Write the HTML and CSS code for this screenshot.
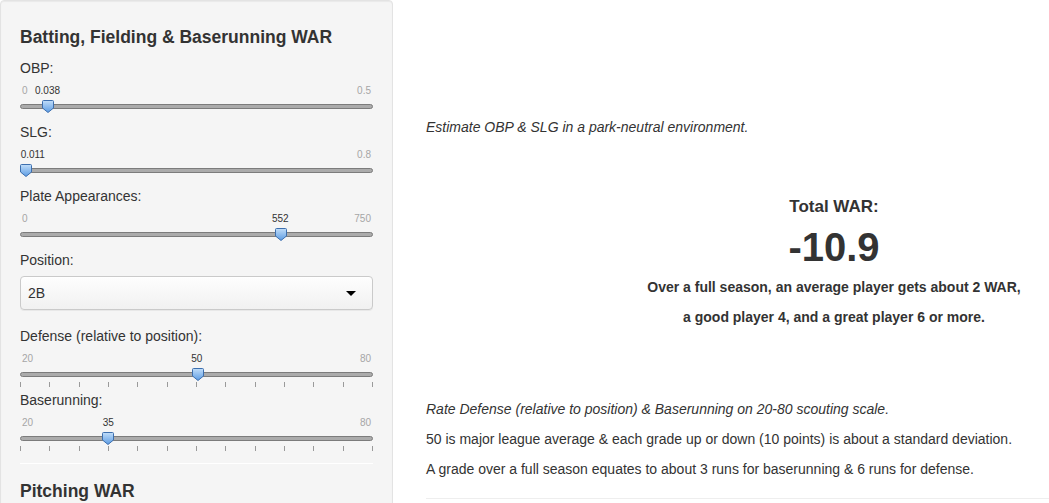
FILE: index.html
```html
<!DOCTYPE html>
<html lang="en">
<head>
  <meta charset="UTF-8">
  <meta name="viewport" content="width=device-width, initial-scale=1.0">
  <title>WAR Calculator</title>
  <link rel="stylesheet" href="styles.css">
</head>
<body>
  <svg class="defs" width="0" height="0">
    <defs>
      <linearGradient id="handleFill" x1="0" y1="0" x2="0" y2="1">
        <stop offset="0" stop-color="#c2def9"/>
        <stop offset="1" stop-color="#5b9be3"/>
      </linearGradient>
    </defs>
  </svg>

  <div class="page">
    <div class="well">
      <h4>Batting, Fielding &amp; Baserunning WAR</h4>

      <div class="field">
        <label>OBP:</label>
        <div class="slider">
          <div class="scale"><span>0</span><span>0.5</span></div>
          <span class="value" style="left: 27.5px">0.038</span>
          <div class="track"></div>
          <span class="handle" style="left: 21.5px"><svg width="12" height="13" viewBox="0 0 12 13"><path d="M1.5 .5h9a1 1 0 0 1 1 1V8L6 12.5.5 8V1.5a1 1 0 0 1 1-1z"/></svg></span>
        </div>
      </div>

      <div class="field">
        <label>SLG:</label>
        <div class="slider">
          <div class="scale"><span></span><span>0.8</span></div>
          <span class="value" style="left: 12.8px">0.011</span>
          <div class="track"></div>
          <span class="handle" style="left: 0px"><svg width="12" height="13" viewBox="0 0 12 13"><path d="M1.5 .5h9a1 1 0 0 1 1 1V8L6 12.5.5 8V1.5a1 1 0 0 1 1-1z"/></svg></span>
        </div>
      </div>

      <div class="field">
        <label>Plate Appearances:</label>
        <div class="slider">
          <div class="scale"><span>0</span><span>750</span></div>
          <span class="value" style="left: 260.3px">552</span>
          <div class="track"></div>
          <span class="handle" style="left: 254.7px"><svg width="12" height="13" viewBox="0 0 12 13"><path d="M1.5 .5h9a1 1 0 0 1 1 1V8L6 12.5.5 8V1.5a1 1 0 0 1 1-1z"/></svg></span>
        </div>
      </div>

      <div class="field">
        <label>Position:</label>
        <div class="select">
          <span>2B</span>
          <span class="caret"></span>
        </div>
      </div>

      <div class="field field-after-select">
        <label>Defense (relative to position):</label>
        <div class="slider">
          <div class="scale"><span>20</span><span>80</span></div>
          <span class="value" style="left: 176.7px">50</span>
          <div class="track"></div>
          <div class="ticks">
            <i></i><i></i><i></i><i></i><i></i><i></i><i></i><i></i><i></i><i></i><i></i><i></i><i></i>
          </div>
          <span class="handle" style="left: 171.7px"><svg width="12" height="13" viewBox="0 0 12 13"><path d="M1.5 .5h9a1 1 0 0 1 1 1V8L6 12.5.5 8V1.5a1 1 0 0 1 1-1z"/></svg></span>
        </div>
      </div>

      <div class="field">
        <label>Baserunning:</label>
        <div class="slider">
          <div class="scale"><span>20</span><span>80</span></div>
          <span class="value" style="left: 88.3px">35</span>
          <div class="track"></div>
          <div class="ticks">
            <i></i><i></i><i></i><i></i><i></i><i></i><i></i><i></i><i></i><i></i><i></i><i></i><i></i>
          </div>
          <span class="handle" style="left: 82.3px"><svg width="12" height="13" viewBox="0 0 12 13"><path d="M1.5 .5h9a1 1 0 0 1 1 1V8L6 12.5.5 8V1.5a1 1 0 0 1 1-1z"/></svg></span>
        </div>
      </div>

      <hr class="well-rule">
      <h4 class="second">Pitching WAR</h4>
    </div>

    <div class="main">
      <p class="note intro">Estimate OBP &amp; SLG in a park-neutral environment.</p>

      <div class="total">
        <h4>Total WAR:</h4>
        <h1>-10.9</h1>
        <h5>Over a full season, an average player gets about 2 WAR,</h5>
        <h5 class="next">a good player 4, and a great player 6 or more.</h5>
      </div>

      <div class="notes">
        <p class="note">Rate Defense (relative to position) &amp; Baserunning on 20-80 scouting scale.</p>
        <p>50 is major league average &amp; each grade up or down (10 points) is about a standard deviation.</p>
        <p>A grade over a full season equates to about 3 runs for baserunning &amp; 6 runs for defense.</p>
      </div>

      <hr class="main-rule">
    </div>
  </div>
</body>
</html>
```

FILE: styles.css
```css
body {
  margin: 0;
  font-family: "Liberation Sans", Arial, Helvetica, sans-serif;
  font-size: 14px;
  line-height: 20px;
  color: #333;
  background: #fff;
  overflow: hidden;
}
.defs {
  position: absolute;
}
.page {
  display: flex;
  gap: 33px;
  width: 1242px;
  height: 503px;
}

/* sidebar */
.well {
  flex: 0 0 393px;
  box-sizing: border-box;
  height: 560px;
  padding: 0 19px;
  background-color: #f5f5f5;
  border: 1px solid #e3e3e3;
  border-radius: 4px;
  box-shadow: inset 0 1px 1px rgba(0,0,0,.05);
}
.well h4 {
  font-size: 17.5px;
  line-height: 20px;
  font-weight: bold;
  margin: 26px 0 11px;
}
.well h4.second {
  margin-top: 17px;
}
label {
  display: block;
  line-height: 20px;
}
.slider {
  position: relative;
  height: 44px;
}
.scale {
  display: flex;
  justify-content: space-between;
  padding: 6px 2px 0;
  font-size: 10px;
  line-height: 14px;
  color: #a6a6a6;
}
.value {
  position: absolute;
  top: 6px;
  font-size: 10px;
  line-height: 14px;
  color: #333;
  transform: translateX(-50%);
}
.track {
  margin-top: 6px;
  height: 3px;
  background-color: #ababab;
  border: 1px solid #7c7c7c;
  border-radius: 3px;
}
.ticks {
  display: flex;
  justify-content: space-between;
  margin-top: 5px;
}
.ticks i {
  width: 1px;
  height: 5px;
  background-color: #9a9a9a;
}
.handle {
  position: absolute;
  top: 22px;
  width: 12px;
  height: 13px;
}
.handle svg {
  display: block;
}
.handle path {
  fill: url(#handleFill);
  stroke: #3d6fae;
  stroke-width: 1;
}
.select {
  display: flex;
  align-items: center;
  justify-content: space-between;
  box-sizing: border-box;
  height: 34px;
  margin-top: 6px;
  padding: 0 16px 0 7px;
  background: linear-gradient(#fefefe, #f1f1f1);
  border: 1px solid #cacaca;
  border-radius: 4px;
  box-shadow: 0 1px 0 rgba(0,0,0,.05), inset 0 1px 0 rgba(255,255,255,.8);
}
.caret {
  width: 0;
  height: 0;
  border-left: 5px solid transparent;
  border-right: 5px solid transparent;
  border-top: 5px solid #000;
}
.field-after-select {
  margin-top: 16px;
}
.well-rule {
  margin: 9px 0 0;
  border: 0;
  border-top: 1px solid #fff;
}

/* main panel */
.main {
  flex: 0 0 816px;
}
.main p {
  margin: 0 0 10px;
}
.note {
  font-style: italic;
}
.main .intro {
  margin: 117px 0 0;
}
.total {
  margin-top: 60px;
  text-align: center;
}
.total h4 {
  font-size: 17px;
  line-height: 20px;
  margin: 0;
}
.total h1 {
  font-size: 40px;
  line-height: 46px;
  margin: 7px 0 0;
}
.total h5 {
  font-size: 14px;
  line-height: 20px;
  margin: 7px 0 0;
}
.total h5.next {
  margin-top: 10px;
}
.notes {
  margin-top: 72px;
}
.main-rule {
  margin: 19px 0 0;
  border: 0;
  border-top: 1px solid #eee;
}
```
